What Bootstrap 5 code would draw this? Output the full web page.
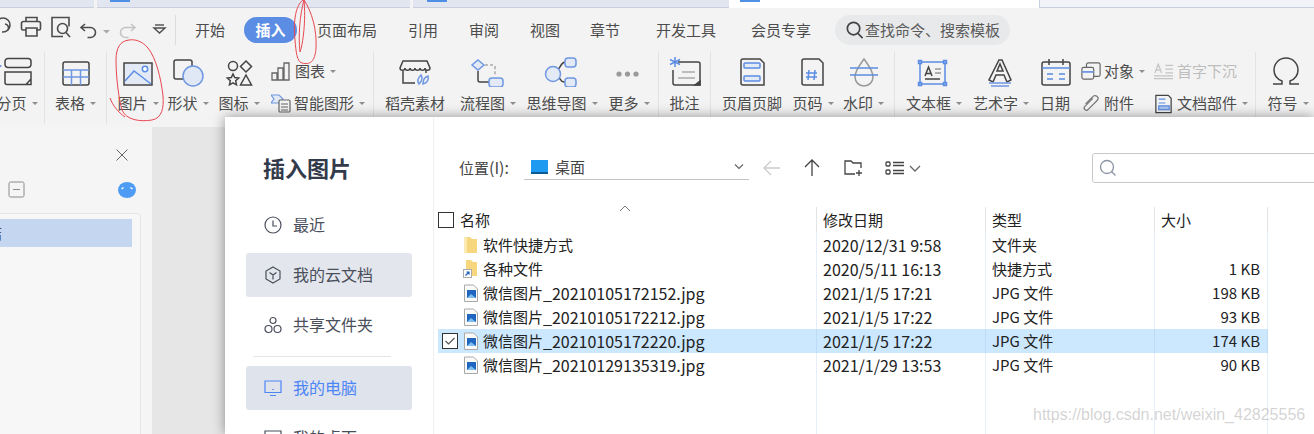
<!DOCTYPE html>
<html lang="zh"><head><meta charset="utf-8"><title>插入图片</title>
<link href="https://cdn.jsdelivr.net/npm/bootstrap@5.3.0/dist/css/bootstrap.min.css" rel="stylesheet">
<style>
html,body{margin:0;height:100%;overflow:hidden}
body{font-family:"Noto Sans CJK SC","Liberation Sans",sans-serif;font-size:15px;line-height:1.2;background:#e6e6e6;color:#4c4c4c}
.stage{position:relative;width:1314px;height:434px;overflow:hidden}
.tabstrip{height:8px;background:#f3f3f3}
.wtab{height:8px;background:#e2e6f0;border-bottom:1px solid #c9cfdf;position:relative;flex:none}
.wt1{width:94px;margin-right:3px}.wt2{width:313px;margin-right:3px}.wt3{width:316px}.wt4{width:310px;background:#fff;border:0}.wt5{width:275px;background:#f1f3f9;border-left:1px solid #c9cfdf}
.tabmark{position:absolute;top:0;width:20px;height:2px;background:#4f8fe6}
.tm1{left:13px}.tm3{left:14px}.tm4{left:11px}
.ribbon{height:119px;background:#f3f3f3}
.tabrow{height:44px}
.tabrow svg{flex:none}
.rtab{flex:none;text-align:center;line-height:26px;height:26px}
.t52{width:52px}.t53{width:53px}.t68{width:68px}.t70{width:70px}.t94{width:94px}.t96{width:96px}.t100{width:100px}
.rtab.on{background:#5b8de4;color:#fff;border-radius:13px;font-weight:700}
.cmd{width:175px;height:30px;margin-left:6px;background:#e8e9eb;border-radius:15px;flex:none;color:#5a5a5a;padding-left:9px}
.toolrow{height:75px;margin-left:-14px}
.vsep{width:1px;height:72px;background:#e3e3e3;flex:none}
.tool{flex:none;height:75px;padding-top:3px;display:flex;flex-direction:column;align-items:center}
.tool svg{flex:none}
.lbl{height:32px;white-space:nowrap;display:flex;align-items:center;gap:5px;flex:none}
.car::after{content:"";display:block;width:0;height:0;border:3.5px solid transparent;border-top-color:#8e8e8e;border-bottom:0}
.tool .car{padding-left:4px}
.tool .car.lp0{padding-left:0}
.w36{width:36px}.w38{width:38px}.w46{width:46px}.w51{width:51px}.w52{width:52px}.w58{width:58px}.w60{width:60px}.w61{width:61px}.w62{width:62px}.w64{width:64px}.w65{width:65px}.w69{width:69px}.w74{width:74px}.w82{width:82px}.w88{width:88px}.w102{width:102px}.w105{width:105px}
.stk{flex:none;height:75px;padding-top:3px;display:flex;flex-direction:column}
.stk2{padding-left:3px}
.srow{height:32px;display:flex;align-items:center;gap:3px;white-space:nowrap}
.dis{color:#bdbdbd}
.lower{height:307px}
.lpanel{width:152px;height:307px;background:#f5f5f5;flex:none;position:relative}
.lx{position:absolute;left:114px;top:20px}
.lminus{position:absolute;left:8px;top:54px}
.lblob{position:absolute;left:118px;top:54px}
.lbox{position:absolute;left:-4px;top:86px;width:145px;height:240px;border:1px solid #e6e6e6;border-radius:4px;background:#f7f7f7}
.lsel{position:absolute;left:0;top:5px;right:8px;height:28px;line-height:28px;background:#c5d6f0;white-space:nowrap;overflow:hidden;color:#444}
.lsel span{margin-left:-10px;display:inline-block}
.dialog{position:absolute;left:225px;top:117px;width:1089px;height:317px;background:#fff;box-shadow:0 0 12px rgba(0,0,0,.4);overflow:hidden}
.side{width:209px;flex:none;border-right:1px solid #f0f0f0;height:317px}
.dtitle{font-size:22px;font-weight:700;color:#333a4a;margin:35px 0 21px 38px;height:30px;line-height:30px}
.sitem{margin:0 21px 6px;height:44px;width:166px;border-radius:3px;font-size:16px;color:#4a4f5c;padding-left:18px;gap:11px}
.sitem.soft{background:#e3e6ec}
.sitem.cur{background:#dfe3eb;color:#4d86f5}
.sdiv{height:1px;width:138px;background:#e5e5e5;margin:9px 0 9px 28px}
.fmain{flex:1;min-width:0;color:#222}
.bar{height:30px;margin-top:36px;padding-left:25px}
.bar svg{flex:none}
.loc{width:65px;color:#444;flex:none}
.num{font-size:16px}
.pick{width:225px;border-bottom:1px solid #c4c4c4;padding:2px 4px 0 7px;gap:7px;flex:none;height:27px;margin-bottom:3px;color:#444}
.sbox{width:240px;height:30px;border:1px solid #c8c8c8;border-radius:3px;margin-left:162px;flex:none;padding-left:6px}
.ftable{table-layout:fixed;width:830px;margin:24px 0 0 4px;border-collapse:separate;border-spacing:0;color:#222;font-size:15px}
.ftable th,.ftable td{padding:0;background:transparent;border:0;border-right:1px solid #e6eefb;box-shadow:none;color:#222;height:24px;line-height:24px;white-space:nowrap;font-weight:400}
.ftable th{height:26px;border-right-color:#e4e4e4;line-height:26px;position:relative;vertical-align:middle}
.ftable .c2,.ftable .c3{padding-left:6px}
.ftable .c4{padding-right:7px;text-align:right}
.ftable th.c4{text-align:left;padding-left:6px}
.ftable tr.sel td{background:#cce8ff;border-right-color:#bedcf5}
.ftable tr.fill td{height:57px}
.col-a{width:379px}.col-b{width:169px}.col-c{width:113px}
.namecell{display:flex;align-items:center;height:24px}
.chkslot{width:25px;flex:none;padding-left:4px;display:flex;align-items:center}
.ficon{width:17px;flex:none;margin-right:3px}
.hname{display:flex;align-items:center;height:26px;gap:6px}
.sortup{position:absolute;left:181px;top:-2px}
.wmark{position:absolute;left:1033px;top:404px;font-family:"Liberation Sans",sans-serif;font-size:16px;color:rgba(150,150,150,.42);white-space:nowrap;line-height:22px}
.ink{position:absolute;left:0;top:0;pointer-events:none}
</style></head>
<body><div class="stage">
<div class="tabstrip d-flex">
  <div class="wtab wt1"></div>
  <div class="wtab wt2"><span class="tabmark tm1"></span></div>
  <div class="wtab wt3"><span class="tabmark tm3"></span></div>
  <div class="wtab wt4"><span class="tabmark tm4"></span></div>
  <div class="wtab wt5"></div>
</div>
<div class="ribbon">
  <div class="tabrow d-flex align-items-center">
    <svg width="176" height="44" viewBox="0 8 176 44" fill="none" stroke="#4c4c4c" stroke-width="1.6">
      <path d="M-4 31v-6a7 7 0 1 1 7 7h-1"/><path d="M5 24a4 4 0 0 1 3 6"/>
      <path d="M26 30h-3a1.500 1.500 0 0 1-1.500-1.500v-5a2 2 0 0 1 2-2h15a2 2 0 0 1 2 2v5a1.500 1.500 0 0 1-1.500 1.500h-3"/><path d="M26 21v-3.500h11V21M26 28h11v8H26z"/>
      <path d="M63 36.500H52v-19h17v9"/><circle cx="62.500" cy="28.500" r="5"/><path d="M66 32.500l4 4.500"/>
      <path d="M85 24l-4 3.500 4 3.500M81.500 27.500h9a5 5 0 0 1 0 10h-3"/><path d="M103 31h7l-3.500 3.500z" fill="#aaa" stroke="none" transform="translate(0 -1)"/>
      <path stroke="#c4c4c4" d="M131 24l4 3.500-4 3.500M134.500 27.500h-9a5 5 0 0 0 0 10h3"/>
      <path stroke-width="1.400" d="M154 28h11l-5.500 5zM154 36" /><path d="M155 25h9" stroke-width="1.400"/>
      <path stroke="#dcdcdc" stroke-width="1" d="M175.500 15v30"/>
    </svg>
    <div class="rtab t68">开始</div><div class="rtab t53 on">插入</div><div class="rtab t100">页面布局</div><div class="rtab t52">引用</div><div class="rtab t70">审阅</div><div class="rtab t52">视图</div><div class="rtab t68">章节</div><div class="rtab t94">开发工具</div><div class="rtab t96">会员专享</div>
    <div class="cmd d-flex align-items-center"><svg width="21" height="22" viewBox="0 0 22 22" fill="none" stroke="#444" stroke-width="1.800"><circle cx="10" cy="9.500" r="6.500"/><path d="M14.500 14.500l5 5"/></svg>查找命令、搜索模板</div>
  </div>
  <div class="toolrow d-flex">
    <div class="tool w58"><svg width="36" height="32" viewBox="0 0 36 32" fill="none" stroke="#444" stroke-width="1.500"><path d="M8 6.500a3 3 0 0 1 3-3h20a3 3 0 0 1 3 3v3a3 3 0 0 1-3 3H11a3 3 0 0 1-3-3z"/><path d="M8 17h26v12.500H10a2 2 0 0 1-2-2zM34 24l-5 5.500"/><path d="M0 8l5 3-5 3z" fill="#5b8de4" stroke="none"/></svg><div class="lbl car">分页</div></div>
    <div class="vsep"></div>
    <div class="tool w61"><svg width="36" height="32" viewBox="0 0 36 32" fill="none" stroke="#444" stroke-width="1.500"><rect x="5" y="7" width="26" height="23" rx="2"/><path stroke="#6f97e2" d="M5 15h26M5 22h26M13.500 15v15M22.500 15v15"/></svg><div class="lbl car lp0">表格</div></div>
    <div class="vsep"></div>
    <div class="tool w62"><svg width="36" height="32" viewBox="0 0 36 32" fill="none" stroke="#444" stroke-width="1.500"><rect x="4" y="8" width="28" height="22" fill="#e3eaf6"/><path stroke="#5b8de4" d="M5 26l9-10 8 6 9 7"/><circle cx="25" cy="14" r="2.700" stroke="#5b8de4" fill="#fff"/></svg><div class="lbl car lp0">图片</div></div>
    <div class="tool w38"><svg width="36" height="32" viewBox="0 0 36 32" fill="none" stroke="#444" stroke-width="1.500"><rect x="4" y="5" width="18" height="19" rx="2"/><circle cx="23" cy="21" r="10" fill="#e0e7f5" stroke="#6f97e2"/></svg><div class="lbl car lp0">形状</div></div>
    <div class="tool w64"><svg width="36" height="32" viewBox="0 0 36 32" fill="none" stroke="#444" stroke-width="1.500"><circle cx="12" cy="11" r="4.500"/><path d="M25 6l5.500 5.500L25 17l-5.500-5.500z"/><path d="M12 19l1.700 3.600 4 .5-3 2.700.8 4-3.500-2-3.500 2 .8-4-3-2.700 4-.5zM25 20l5.500 10h-11z"/></svg><div class="lbl car lp0">图标</div></div>
    <div class="stk w102">
      <div class="srow"><svg width="21" height="22" viewBox="0 0 21 22" fill="none" stroke="#666" stroke-width="1.300"><path d="M1 20V13h5v7zM7 20V8h5v12zM13 20V3h5v17z"/></svg><span class="lbl car">图表</span></div>
      <div class="srow"><svg width="20" height="22" viewBox="0 0 20 22" fill="none" stroke="#666" stroke-width="1.200"><path stroke="#6f97e2" fill="#e3eaf6" d="M0 3h8l4 4-4 4H0l3-4z"/><rect x="8" y="8" width="11" height="12" rx="1" fill="#f3f3f3"/><path d="M10 12h7M10 15h7M10 18h7"/></svg><span class="lbl car">智能图形</span></div>
    </div>
    <div class="vsep"></div>
    <div class="tool w82"><svg width="36" height="32" viewBox="0 0 36 32" fill="none" stroke="#444" stroke-width="1.500"><path d="M6 6h24l3 7c0 3-5 3-5 0 0 3-5 3-5 0 0 3-5 3-5 0 0 3-5 3-5 0 0 3-5 3-5 0 0 3-5 3-5 0z"/><path d="M6 16v12h12M29 15v3"/><path stroke="#6f97e2" d="M22 29c-3-4 0-7 2-9 2 3 1 6-2 9zM26 29c0-4 2-7 5-8 1 4-1 7-5 8zM31 29"/></svg><div class="lbl">稻壳素材</div></div>
    <div class="tool w60"><svg width="36" height="32" viewBox="0 0 36 32" fill="none" stroke="#444" stroke-width="1.500"><path stroke="#6f97e2" fill="#e3eaf6" d="M10 5l6 5-6 5-6-5z"/><path stroke="#aaa" stroke-dasharray="3 2" d="M17 10h8a2 2 0 0 1 2 2v9"/><path d="M10 16v9a2 2 0 0 0 2 2h9"/><rect x="21" y="23" width="14" height="9" rx="3" fill="#e3eaf6" stroke="#6f97e2"/></svg><div class="lbl car">流程图</div></div>
    <div class="tool w88"><svg width="36" height="32" viewBox="0 0 36 32" fill="none" stroke="#444" stroke-width="1.500"><path d="M16 14c3-1 2-6 7-7M16 22c3 1 2 6 7 5"/><circle cx="11" cy="19" r="7.500" fill="#e3eaf6" stroke="#6f97e2"/><rect x="23" y="3" width="11" height="9" rx="3" fill="#e3eaf6" stroke="#6f97e2"/><rect x="23" y="23" width="11" height="9" rx="3" fill="#e3eaf6" stroke="#6f97e2"/></svg><div class="lbl car">思维导图</div></div>
    <div class="tool w46 me-2"><svg width="36" height="32" viewBox="0 0 36 32" fill="#9a9a9a"><circle cx="10" cy="19" r="2.600"/><circle cx="18.500" cy="19" r="2.600"/><circle cx="27" cy="19" r="2.600"/></svg><div class="lbl car">更多</div></div>
    <div class="vsep"></div>
    <div class="tool w51"><svg width="36" height="32" viewBox="0 0 36 32" fill="none" stroke="#444" stroke-width="1.500"><path d="M11 7h20a2 2 0 0 1 2 2v21H8a2 2 0 0 1-2-2V15"/><path stroke="#aaa" d="M15 17h13M11 23h17"/><path stroke="#5b8de4" d="M8 2v10M3 4.500l10 5M13 4.500l-10 5"/><path d="M33 26l-5 4h5z" fill="#444"/></svg><div class="lbl">批注</div></div>
    <div class="vsep"></div>
    <div class="tool w82"><svg width="36" height="32" viewBox="0 0 36 32" fill="none" stroke="#444" stroke-width="1.500"><path d="M7 6a2 2 0 0 1 2-2h17l4 4v22H9a2 2 0 0 1-2-2z"/><rect x="10" y="8" width="16" height="5" rx="1" fill="#e3eaf6" stroke="#5b8de4"/><rect x="10" y="21" width="16" height="5" rx="1" fill="#e3eaf6" stroke="#5b8de4"/></svg><div class="lbl">页眉页脚</div></div>
    <div class="tool w36"><svg width="36" height="32" viewBox="0 0 36 32" fill="none" stroke="#444" stroke-width="1.500"><path d="M9 6a2 2 0 0 1 2-2h15l4 4v22H11a2 2 0 0 1-2-2z"/><path stroke="#5b8de4" d="M16 15l-1 10M22 15l-1 10M13 18h11M13 22h11"/></svg><div class="lbl car">页码</div></div>
    <div class="tool w65"><svg width="36" height="32" viewBox="0 0 36 32" fill="none" stroke="#999" stroke-width="1.500"><path d="M20 4c-4 6-9 11-9 18a9 9 0 0 0 18 0c0-7-5-12-9-18z"/><path stroke="#5b8de4" d="M6 13h28M6 20h28"/></svg><div class="lbl car">水印</div></div>
    <div class="vsep"></div>
    <div class="tool w74"><svg width="36" height="32" viewBox="0 0 36 32" fill="none" stroke="#444" stroke-width="1.500"><rect x="6" y="7" width="25" height="22" stroke="#5b8de4"/><g fill="#8fb0ea" stroke="#5b8de4"><rect x="4.500" y="5.500" width="3" height="3"/><rect x="29.500" y="5.500" width="3" height="3"/><rect x="4.500" y="27.500" width="3" height="3"/><rect x="29.500" y="27.500" width="3" height="3"/></g><path d="M11 21l3.500-9 3.500 9M12 18.500h5M11 24h15"/><path stroke="#999" d="M21 14h6M21 18h6"/></svg><div class="lbl car">文本框</div></div>
    <div class="tool w60"><svg width="36" height="32" viewBox="0 0 36 32" fill="none" stroke="#444" stroke-width="1.500"><path d="M18 5h3l9 20-4 2-3-7h-8l-3 7-4-2zM16 16l3-7 3 7z"/><path stroke="#6f97e2" d="M8 28h22M10 31h18"/></svg><div class="lbl car">艺术字</div></div>
    <div class="tool w52"><svg width="36" height="32" viewBox="0 0 36 32" fill="none" stroke="#444" stroke-width="1.500"><path d="M5 9a2 2 0 0 1 2-2h24a2 2 0 0 1 2 2v19a2 2 0 0 1-2 2H7a2 2 0 0 1-2-2zM12 4v6M26 4v6"/><path stroke="#5b8de4" d="M5 13h28M10 19h6M22 19h6M10 24h6M22 24h6"/></svg><div class="lbl">日期</div></div>
    <div class="stk w69">
      <div class="srow"><svg width="20" height="20" viewBox="0 0 22 22" fill="none" stroke="#666" stroke-width="1.300"><rect x="6" y="2" width="15" height="15" rx="2"/><rect x="1" y="7" width="13" height="13" rx="2" fill="#f3f3f3"/><path stroke="#6f97e2" stroke-width="2" d="M1 12h13"/></svg><span class="lbl car">对象</span></div>
      <div class="srow"><svg width="20" height="20" viewBox="0 0 22 22" fill="none" stroke="#777" stroke-width="1.300"><path d="M5 12l8-8a3 3 0 0 1 5 4L8 18a2 2 0 0 1-4-3l9-9M3 18"/></svg><span class="lbl">附件</span></div>
    </div>
    <div class="stk stk2 w105">
      <div class="srow dis"><svg width="21" height="22" viewBox="0 0 22 22" fill="none" stroke="#c4c4c4" stroke-width="1.300"><path d="M2 13l3.500-9 3.500 9M3 10h5M13 5h8M13 9h8M13 13h8M1 16h20M1 19h20"/></svg><span>首字下沉</span></div>
      <div class="srow"><svg width="21" height="22" viewBox="0 0 22 22" fill="none" stroke="#444" stroke-width="1.300"><path d="M3 3h13l3 3v15H3z"/><path stroke="#5b8de4" d="M6 7h7M6 11h7"/><rect x="6" y="14" width="11" height="4" fill="#a9c2ee" stroke="#5b8de4"/></svg><span class="lbl car">文档部件</span></div>
    </div>
    <div class="vsep"></div>
    <div class="tool w60"><svg width="36" height="32" viewBox="0 0 36 32" fill="none" stroke="#444" stroke-width="1.500"><path d="M5 29h9v-3c-5-2-8-6-8-11a12 12 0 0 1 24 0c0 5-3 9-8 11v3h9"/></svg><div class="lbl car">符号</div></div>
  </div>
</div>
<div class="lower d-flex">
  <div class="lpanel">
    <svg class="lx" width="16" height="16" viewBox="0 0 16 16" stroke="#666" fill="none"><path d="M2.500 2.500l11 11M13.500 2.500l-11 11"/></svg>
    <svg class="lminus" width="18" height="18" viewBox="0 0 18 18" fill="none" stroke="#8a8a8a"><rect x="1" y="1" width="15" height="15" rx="1.500"/><path d="M5 8.500h7"/></svg>
    <svg class="lblob" width="18" height="18" viewBox="0 0 18 18"><ellipse cx="9" cy="9" rx="9" ry="8" fill="#4f9cf5"/><path d="M3.500 8l2-1.500M14.500 8l-2-1.500" stroke="#fff" stroke-width="1.500"/></svg>
    <div class="lbox"><div class="lsel"><span>结</span></div></div>
  </div>
</div>
<div class="dialog d-flex">
  <div class="side">
    <div class="dtitle">插入图片</div>
    <div class="sitem d-flex align-items-center"><svg width="18" height="18" viewBox="0 0 18 18" fill="none" stroke="#4a4f5c" stroke-width="1.200"><circle cx="9" cy="9" r="8"/><path d="M9 4.500V10h4"/></svg>最近</div>
    <div class="sitem soft d-flex align-items-center"><svg width="18" height="18" viewBox="0 0 18 18" fill="none" stroke="#4a4f5c" stroke-width="1.200"><path d="M9 1l7 4v8l-7 4-7-4V5zM5.500 6.500L9 9l3.500-2.500M9 9v4.500"/></svg>我的云文档</div>
    <div class="sitem d-flex align-items-center"><svg width="18" height="18" viewBox="0 0 18 18" fill="none" stroke="#4a4f5c" stroke-width="1.200"><circle cx="9" cy="4.500" r="3"/><circle cx="4.500" cy="13" r="3.500"/><circle cx="13.500" cy="13" r="3.500"/></svg>共享文件夹</div>
    <div class="sdiv"></div>
    <div class="sitem cur d-flex align-items-center"><svg width="18" height="18" viewBox="0 0 18 18" fill="none" stroke="#4d86f5" stroke-width="1.200"><path d="M1 2h16v11.500H1zM6 16.500h6"/><path d="M9 10v1" stroke-width="1.600"/></svg>我的电脑</div>
    <div class="sitem d-flex align-items-center"><svg width="18" height="18" viewBox="0 0 18 18" fill="none" stroke="#4a4f5c" stroke-width="1.200"><path d="M1 2h16v12H1z"/></svg>我的桌面</div>
  </div>
  <div class="fmain">
    <div class="bar d-flex align-items-center">
      <div class="loc">位置<span class="num">(I):</span></div>
      <div class="pick d-flex align-items-center"><svg width="17" height="14" viewBox="0 0 17 14"><rect width="17" height="13" fill="#1e9bf0"/><rect y="12" width="17" height="2" fill="#0c5a94"/></svg><span>桌面</span><svg class="ms-auto" width="12" height="8" viewBox="0 0 12 8" fill="none" stroke="#666" stroke-width="1.200"><path d="M2 1.500L6 5.500 10 1.500"/></svg></div>
      <svg class="ms-1" width="38" height="22" viewBox="0 0 38 22" fill="none" stroke="#ccc" stroke-width="1.300"><path d="M27 11H11M18 4l-7 7 7 7"/></svg>
      <svg width="41" height="22" viewBox="0 0 41 22" fill="none" stroke="#444" stroke-width="1.300"><path d="M21 19V4M14 10l7-7 7 7"/></svg>
      <svg width="48" height="22" viewBox="0 0 48 22" fill="none" stroke="#444" stroke-width="1.300"><path d="M29 11V6h-8l-2-2h-6v13h10M27 13v6M24 16h6" /></svg>
      <svg width="50" height="22" viewBox="0 0 50 22" fill="none" stroke="#444" stroke-width="1.300"><rect x="6" y="5" width="4" height="4" rx="1"/><rect x="6" y="13" width="4" height="4" rx="1"/><path d="M13 5.500h11M13 8.500h11M13 13.500h11M13 16.500h11"/><path stroke="#666" d="M30 9l5 5 5-5"/></svg>
      <div class="sbox d-flex align-items-center"><svg width="18" height="18" viewBox="0 0 18 18" fill="none" stroke="#8a93a3" stroke-width="1.300"><circle cx="8" cy="8" r="6.500"/><path d="M12.500 12.500l4 4"/></svg></div>
    </div>
    <table class="table table-borderless ftable mb-0">
      <colgroup><col class="col-a"><col class="col-b"><col class="col-b"><col class="col-c"></colgroup>
      <thead><tr><th class="c1"><div class="hname"><svg width="16" height="16" viewBox="0 0 16 16" fill="none" stroke="#333"><rect x=".5" y=".5" width="15" height="15"/></svg>名称</div><svg class="sortup" width="12" height="7" viewBox="0 0 12 7" fill="none" stroke="#777"><path d="M1 6l5-5 5 5"/></svg></th><th class="c2">修改日期</th><th class="c3">类型</th><th class="c4">大小</th></tr></thead>
      <tbody>
      <tr><td><div class="namecell"><span class="chkslot"></span><svg class="ficon" width="17" height="18" viewBox="0 0 17 18"><path d="M1 1h6l2 2h5v14H1z" fill="#f6d77e"/><path d="M1 1h3v16H1z" fill="#fbeab4"/></svg>软件快捷方式</div></td><td class="c2 num">2020/12/31 9:58</td><td class="c3">文件夹</td><td class="c4"></td></tr>
      <tr><td><div class="namecell"><span class="chkslot"></span><svg class="ficon" width="17" height="18" viewBox="0 0 17 18"><path d="M3 0h5l2 2h4v14H3z" fill="#f6d77e"/><rect x="0.500" y="9.500" width="8" height="8" fill="#fff" stroke="#aaa"/><path d="M2.500 15.500l3-3M3.500 12h2.500v2.500" stroke="#1f5fb8" fill="none" stroke-width="1.200"/></svg>各种文件</div></td><td class="c2 num">2020/5/11 16:13</td><td class="c3">快捷方式</td><td class="c4">1 KB</td></tr>
      <tr><td><div class="namecell"><span class="chkslot"></span><svg class="ficon" width="17" height="18" viewBox="0 0 17 18"><path d="M1.500 1h9l4 4v12.500h-13z" fill="#fafafa" stroke="#a8a8a8"/><rect x="4" y="6" width="9" height="8" fill="#1e66c0"/><path d="M4 14l4-4 5 4z" fill="#7fbdf0"/></svg>微信图片<span class="num">_20210105172152.jpg</span></div></td><td class="c2 num">2021/1/5 17:21</td><td class="c3">JPG 文件</td><td class="c4">198 KB</td></tr>
      <tr><td><div class="namecell"><span class="chkslot"></span><svg class="ficon" width="17" height="18" viewBox="0 0 17 18"><path d="M1.500 1h9l4 4v12.500h-13z" fill="#fafafa" stroke="#a8a8a8"/><rect x="4" y="6" width="9" height="8" fill="#1e66c0"/><path d="M4 14l4-4 5 4z" fill="#7fbdf0"/></svg>微信图片<span class="num">_20210105172212.jpg</span></div></td><td class="c2 num">2021/1/5 17:22</td><td class="c3">JPG 文件</td><td class="c4">93 KB</td></tr>
      <tr class="sel"><td><div class="namecell"><span class="chkslot"><svg width="16" height="16" viewBox="0 0 16 16" fill="#fff" stroke="#333"><rect x=".5" y=".5" width="15" height="15"/><path d="M3.500 8l3 3 6-6" fill="none" stroke="#555" stroke-width="1.200"/></svg></span><svg class="ficon" width="17" height="18" viewBox="0 0 17 18"><path d="M1.500 1h9l4 4v12.500h-13z" fill="#fafafa" stroke="#a8a8a8"/><rect x="4" y="6" width="9" height="8" fill="#1e66c0"/><path d="M4 14l4-4 5 4z" fill="#7fbdf0"/></svg>微信图片<span class="num">_20210105172220.jpg</span></div></td><td class="c2 num">2021/1/5 17:22</td><td class="c3">JPG 文件</td><td class="c4">174 KB</td></tr>
      <tr><td><div class="namecell"><span class="chkslot"></span><svg class="ficon" width="17" height="18" viewBox="0 0 17 18"><path d="M1.500 1h9l4 4v12.500h-13z" fill="#fafafa" stroke="#a8a8a8"/><rect x="4" y="6" width="9" height="8" fill="#1e66c0"/><path d="M4 14l4-4 5 4z" fill="#7fbdf0"/></svg>微信图片<span class="num">_20210129135319.jpg</span></div></td><td class="c2 num">2021/1/29 13:53</td><td class="c3">JPG 文件</td><td class="c4">90 KB</td></tr>
      <tr class="fill"><td></td><td></td><td></td><td></td></tr>
      </tbody>
    </table>
  </div>
</div>
<svg class="ink" width="1314" height="434" viewBox="0 0 1314 434" fill="none" stroke="#e8474f" stroke-width="1">
  <path d="M129 40C120 41 116 48 116 60C116 78 119 100 122 110C126 120 140 122 152 120C162 118 164 108 163 96C161 78 156 58 148 48C142 41 135 39 129 40Z"/>
  <path d="M110 98C113 106 118 112 125 117"/>
  <path d="M303 0C296 5 293 20 295 40C296 52 297 62 302 63C310 65 315 62 316 48C317 30 312 12 304 0"/>
  <path d="M304 0C300 14 298 36 300 52C303 44 306 20 304 0"/>
</svg>
<div class="wmark">https://blog.csdn.net/weixin_42825556</div>
</div>
<script src="https://cdn.jsdelivr.net/npm/bootstrap@5.3.0/dist/js/bootstrap.bundle.min.js"></script>
</body></html>
